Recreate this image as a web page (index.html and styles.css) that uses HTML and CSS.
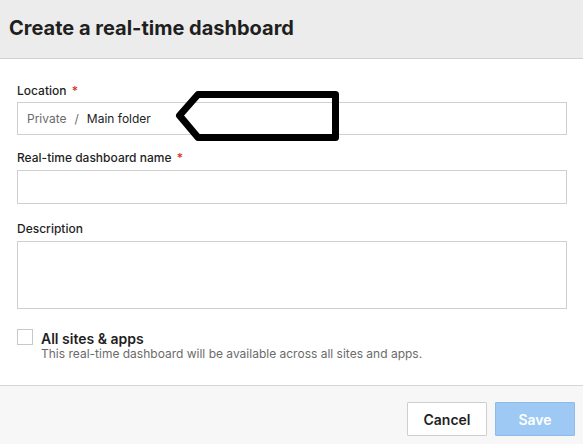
FILE: index.html
```html
<!DOCTYPE html>
<html>
<head>
<meta charset="utf-8">
<link rel="stylesheet" href="styles.css">
</head>
<body>
<div class="dialog">
  <header class="header">
    <h1 class="title">Create a real-time dashboard</h1>
  </header>
  <main class="content">
    <div class="field">
      <label class="label label-tight">Location <span class="req">*</span></label>
      <div class="input location">
        <span class="crumb-muted">Private</span>
        <span class="sep">/</span>
        <span class="crumb">Main folder</span>
      </div>
    </div>
    <div class="field field-name">
      <label class="label">Real-time dashboard name <span class="req">*</span></label>
      <div class="input name"></div>
    </div>
    <div class="field field-last">
      <label class="label">Description</label>
      <div class="input textarea"></div>
    </div>
    <div class="check-row">
      <span class="checkbox"></span>
      <div class="check-text">
        <div class="check-title">All sites &amp; apps</div>
        <div class="check-desc">This real-time dashboard will be available across all sites and apps.</div>
      </div>
    </div>
  </main>
  <footer class="footer">
    <button class="btn btn-cancel">Cancel</button>
    <button class="btn btn-save">Save</button>
  </footer>
</div>
<svg class="annotation" width="583" height="444" viewBox="0 0 583 444">
  <path d="M198 94.5 L335.5 94.5 L335.5 137.5 L198 137.5 L179.5 115.5 Z" fill="none" stroke="#000" stroke-width="7" stroke-linejoin="round"/>
</svg>
</body>
</html>
```

FILE: styles.css
```css
* { box-sizing: border-box; }
html, body { margin: 0; padding: 0; }
body {
  width: 583px;
  height: 444px;
  overflow: hidden;
  font-family: Inter, "Noto Sans", sans-serif;
  color: #222;
  background: #fff;
  position: relative;
}
.dialog {
  display: flex;
  flex-direction: column;
  height: 444px;
}
.header {
  height: 59px;
  background: #ececec;
  border-bottom: 1px solid #d2d2d2;
  display: flex;
  align-items: center;
  padding-left: 9px;
  padding-bottom: 2px;
}
.title {
  margin: 0;
  font-size: 20px;
  font-weight: 700;
  color: #1f1f1f;
}
.content {
  flex: 1;
  padding: 24px 16px 0 17px;
  display: flex;
  flex-direction: column;
}
.field {
  display: flex;
  flex-direction: column;
  margin-bottom: 15px;
}
.field-name { margin-bottom: 17px; }
.field-last { margin-bottom: 0; }
.label {
  font-size: 12px;
  font-weight: 500;
  line-height: 16px;
  color: #1f1f1f;
  margin-bottom: 4px;
}
.label-tight { margin-bottom: 3px; }
.req { color: #d93025; margin-left: 2px; }
.input {
  border: 1px solid #cfcfcf;
  background: #fff;
  height: 33px;
}
.location {
  display: flex;
  align-items: center;
  padding-left: 9px;
  font-size: 12px;
}
.crumb-muted { color: #6b6b6b; }
.sep { color: #6b6b6b; margin: 0 8px; }
.crumb { color: #222; }
.name { height: 34px; }
.textarea { height: 68px; }
.check-row {
  display: flex;
  gap: 8px;
  margin-top: 20px;
}
.checkbox {
  width: 16px;
  height: 16px;
  border: 1px solid #c8c8c8;
  background: #fff;
}
.check-text { padding-top: 1px; }
.check-title {
  font-size: 14px;
  font-weight: 600;
  line-height: 18px;
  color: #1f1f1f;
}
.check-desc {
  font-size: 12px;
  line-height: 11px;
  color: #6b6b6b;
}
.footer {
  height: 59px;
  background: #f7f7f7;
  border-top: 1px solid #d6d6d6;
  display: flex;
  justify-content: flex-end;
  align-items: flex-start;
  gap: 8px;
  padding: 16px 8px 0 0;
}
.btn {
  width: 80px;
  height: 34px;
  font-family: Inter, "Noto Sans", sans-serif;
  font-size: 14px;
  font-weight: 600;
  border-radius: 1px;
}
.btn-cancel {
  background: #fff;
  border: 1px solid #cfcfcf;
  color: #1f1f1f;
}
.btn-save {
  background: #9ec9f5;
  border: 1px solid #8fbbea;
  color: #fff;
}
.annotation {
  position: absolute;
  left: 0;
  top: 0;
  pointer-events: none;
}
```
